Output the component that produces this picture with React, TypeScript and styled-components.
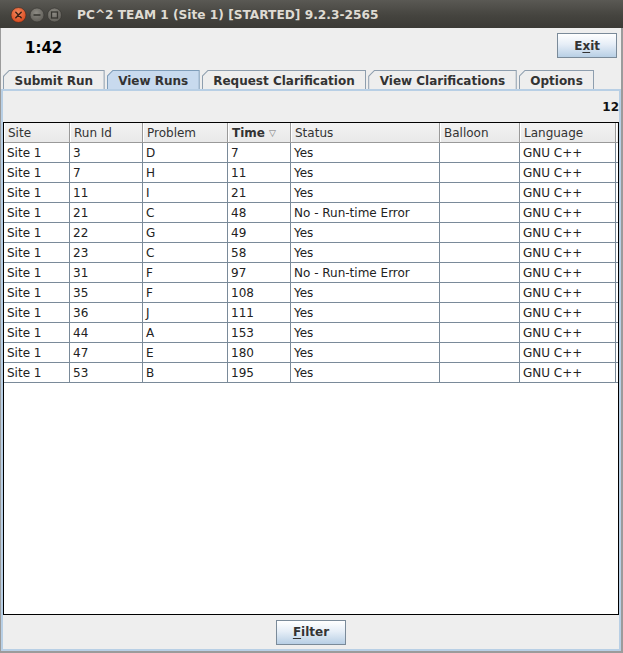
import React from "react";
import styled, { createGlobalStyle } from "styled-components";

const UI_FONT = `"DejaVu Sans", "Liberation Sans", sans-serif`;
const GRID = "#7a8a99";

const GlobalStyle = createGlobalStyle`
  html, body {
    margin: 0;
    padding: 0;
    background: #eeeeee;
  }
  #root {
    width: 623px;
    height: 653px;
  }
`;

const Window = styled.div`
  width: 623px;
  height: 653px;
  display: flex;
  flex-direction: column;
  overflow: hidden;
  font-family: ${UI_FONT};
`;

const TitleBar = styled.div`
  height: 28px;
  flex: none;
  display: flex;
  align-items: center;
  background: linear-gradient(#5a5954, #45443f 55%, #3b3a36);
`;

const Title = styled.span`
  margin-left: 7px;
  margin-top: 2px;
  color: #dfdbd2;
  font-size: 12.2px;
  font-weight: bold;
  white-space: nowrap;
`;

const Frame = styled.div`
  flex: 1;
  min-height: 0;
  display: flex;
  flex-direction: column;
  background: #eeeeee;
  border-style: solid;
  border-color: #9b9b9b;
  border-width: 0 2px 2px 1px;
`;

const TopBar = styled.div`
  height: 41px;
  flex: none;
  box-sizing: border-box;
  display: flex;
  justify-content: space-between;
  align-items: flex-start;
  padding: 5px 4px 0 24px;
`;

const Timer = styled.div`
  margin-top: 6px;
  font-size: 15px;
  font-weight: bold;
  line-height: 18px;
  color: #000;
`;

const Button = styled.button`
  height: 25px;
  padding: 0 16px;
  border: 1px solid #7a8a99;
  border-radius: 0;
  background: linear-gradient(#ffffff, #e6eef7 45%, #b8cfe5);
  font-family: ${UI_FONT};
  font-size: 12px;
  font-weight: bold;
  color: #333333;
  cursor: pointer;

  u {
    text-decoration-thickness: 1px;
    text-underline-offset: 2px;
  }
`;

const TabStrip = styled.div`
  height: 20px;
  flex: none;
  display: flex;
  align-items: flex-end;
  gap: 2px;
  padding-left: 2px;
`;

const Tab = styled.div<{ $active?: boolean }>`
  height: 19px;
  box-sizing: border-box;
  padding: 1px 1px 0 1px;
  background: ${({ $active }) => ($active ? "#7f9db9" : "#8e9eae")};
  clip-path: polygon(6px 0, 100% 0, 100% 100%, 0 100%, 0 6px);
`;

const TabFace = styled.div<{ $active?: boolean }>`
  height: 100%;
  display: flex;
  align-items: center;
  padding: 1px 10.5px 0;
  box-sizing: border-box;
  background: ${({ $active }) => ($active ? "#c8daee" : "#eeeeee")};
  clip-path: polygon(5.4px 0, 100% 0, 100% 100%, 0 100%, 0 5.4px);
  font-size: 12px;
  font-weight: bold;
  color: #333333;
  white-space: nowrap;
`;

const Panel = styled.div`
  flex: 1;
  min-height: 0;
  display: flex;
  flex-direction: column;
  border: 2px solid #b8cfe5;
`;

const CountRow = styled.div`
  height: 31px;
  flex: none;
  display: flex;
  justify-content: flex-end;
  align-items: center;
  font-size: 12px;
  font-weight: bold;
  color: #111;
`;

const ScrollPane = styled.div`
  flex: 1;
  min-height: 0;
  border: 1px solid #000;
  background: #ffffff;
  overflow: hidden;
`;

const COLUMNS = "66px 73px 85px 63px 149px 80px 96px 1fr";

const Row = styled.div`
  display: grid;
  grid-template-columns: ${COLUMNS};
  height: 20px;
`;

const HeadCell = styled.div<{ $sorted?: boolean }>`
  box-sizing: border-box;
  display: flex;
  align-items: center;
  padding-left: 4px;
  background: linear-gradient(#f2f2f2, #e9e9e9);
  border-right: 1px solid #999999;
  border-bottom: 1px solid #999999;
  box-shadow: inset 1px 0 #ffffff;
  font-size: 12px;
  font-weight: ${({ $sorted }) => ($sorted ? "bold" : "normal")};
  color: #333333;
  white-space: nowrap;
  overflow: hidden;
`;

const SortMark = styled.span`
  margin-left: 4px;
  font-size: 9px;
  font-weight: normal;
  color: #777777;
`;

const Cell = styled.div<{ $filler?: boolean }>`
  box-sizing: border-box;
  display: flex;
  align-items: center;
  padding-left: 3px;
  border-right: ${({ $filler }) => ($filler ? "none" : `1px solid ${GRID}`)};
  border-bottom: 1px solid ${GRID};
  font-size: 12px;
  color: #222222;
  white-space: nowrap;
  overflow: hidden;
`;

const FilterRow = styled.div`
  height: 34px;
  flex: none;
  display: flex;
  justify-content: center;
  align-items: center;
`;

const WindowButtons = () => (
  <svg width="70" height="28" viewBox="0 0 70 28">
    <defs>
      <radialGradient id="close" cx="45%" cy="35%" r="65%">
        <stop offset="0" stopColor="#f48a5f" />
        <stop offset="1" stopColor="#d7471c" />
      </radialGradient>
      <radialGradient id="grey" cx="45%" cy="35%" r="65%">
        <stop offset="0" stopColor="#8d8b84" />
        <stop offset="1" stopColor="#5f5d57" />
      </radialGradient>
    </defs>
    <circle cx="18.5" cy="15" r="7.5" fill="url(#close)" stroke="#3a2a22" strokeWidth="0.6" />
    <path d="M15.8 12.3 L21.2 17.7 M21.2 12.3 L15.8 17.7" stroke="#3b2218" strokeWidth="1.5" strokeLinecap="round" />
    <circle cx="37" cy="15" r="7" fill="url(#grey)" stroke="#34332f" strokeWidth="0.6" />
    <path d="M33.5 15 H40.5" stroke="#35342f" strokeWidth="1.5" />
    <circle cx="54.5" cy="15" r="7" fill="url(#grey)" stroke="#34332f" strokeWidth="0.6" />
    <rect x="51.5" y="12" width="6" height="6" fill="none" stroke="#35342f" strokeWidth="1.3" />
  </svg>
);

const tabs = ["Submit Run", "View Runs", "Request Clarification", "View Clarifications", "Options"];

const headers = ["Site", "Run Id", "Problem", "Time", "Status", "Balloon", "Language"];

const runs: [string, string, string, string][] = [
  ["3", "D", "7", "Yes"],
  ["7", "H", "11", "Yes"],
  ["11", "I", "21", "Yes"],
  ["21", "C", "48", "No - Run-time Error"],
  ["22", "G", "49", "Yes"],
  ["23", "C", "58", "Yes"],
  ["31", "F", "97", "No - Run-time Error"],
  ["35", "F", "108", "Yes"],
  ["36", "J", "111", "Yes"],
  ["44", "A", "153", "Yes"],
  ["47", "E", "180", "Yes"],
  ["53", "B", "195", "Yes"],
];

export default function App() {
  return (
    <>
      <GlobalStyle />
      <Window>
        <TitleBar>
          <WindowButtons />
          <Title>PC^2 TEAM 1 (Site 1) [STARTED] 9.2.3-2565</Title>
        </TitleBar>
        <Frame>
          <TopBar>
            <Timer>1:42</Timer>
            <Button type="button">
              E<u>x</u>it
            </Button>
          </TopBar>
          <TabStrip>
            {tabs.map((t) => (
              <Tab key={t} $active={t === "View Runs"}>
                <TabFace $active={t === "View Runs"}>{t}</TabFace>
              </Tab>
            ))}
          </TabStrip>
          <Panel>
            <CountRow>12</CountRow>
            <ScrollPane>
              <Row>
                {headers.map((h) => (
                  <HeadCell key={h} $sorted={h === "Time"}>
                    {h}
                    {h === "Time" && <SortMark>▽</SortMark>}
                  </HeadCell>
                ))}
                <HeadCell />
              </Row>
              {runs.map(([id, problem, time, status]) => (
                <Row key={id}>
                  <Cell>Site 1</Cell>
                  <Cell>{id}</Cell>
                  <Cell>{problem}</Cell>
                  <Cell>{time}</Cell>
                  <Cell>{status}</Cell>
                  <Cell />
                  <Cell>GNU C++</Cell>
                  <Cell $filler />
                </Row>
              ))}
            </ScrollPane>
            <FilterRow>
              <Button type="button">
                <u>F</u>ilter
              </Button>
            </FilterRow>
          </Panel>
        </Frame>
      </Window>
    </>
  );
}
